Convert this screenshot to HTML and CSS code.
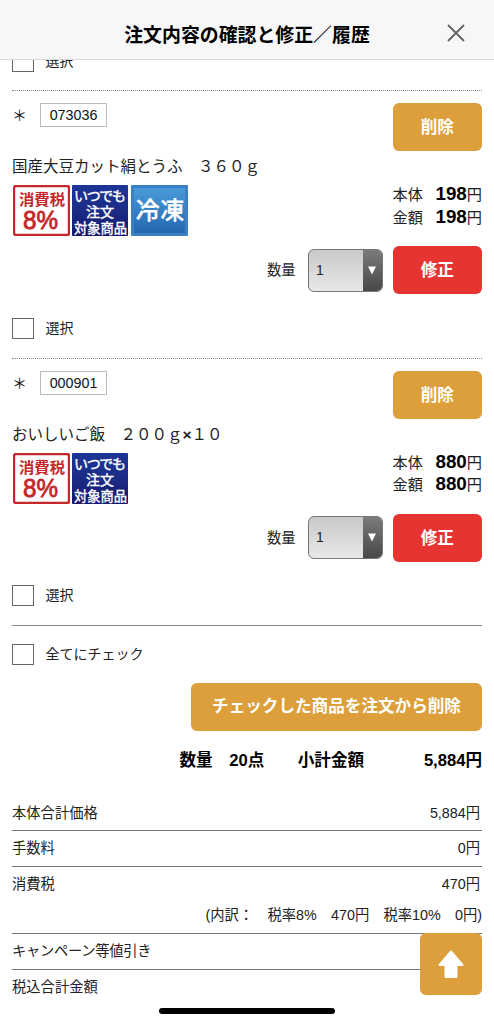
FILE: index.html
```
<!DOCTYPE html>
<html lang="ja">
<head>
<meta charset="utf-8">
<title>注文内容の確認と修正／履歴</title>
<link rel="stylesheet" href="styles.css">
</head>
<body>
<header class="header">
  <h1 class="title">注文内容の確認と修正／履歴</h1>
  <svg class="close" viewBox="0 0 18 18"><path d="M1 1L17 17M17 1L1 17"/></svg>
</header>
<main class="content">
  <label class="check"><span class="box"></span><span>選択</span></label>

  <section class="item">
    <div class="item-head"><span class="star">＊</span><span class="code">073036</span><button class="btn">削除</button></div>
    <div class="name">国産大豆カット絹とうふ　３６０ｇ</div>
    <div class="info">
      <div class="badges">
        <svg class="badge" viewBox="0 0 57 51"><rect class="tax-bg" x="1" y="1" width="55" height="49" rx="2"/><text class="tax-t" x="6" y="20" textLength="46">消費税</text><text class="tax-n" x="10" y="44" textLength="35" lengthAdjust="spacingAndGlyphs">8%</text></svg>
        <svg class="badge" viewBox="0 0 57 51"><defs><linearGradient id="navy" x2="0" y2="1"><stop offset="0" stop-color="#1c3596"/><stop offset=".5" stop-color="#1c2c86"/><stop offset="1" stop-color="#14176c"/></linearGradient></defs><rect width="56" height="51" rx="1" fill="url(#navy)"/><text class="any" x="2" y="16" textLength="52">いつでも</text><text class="any" x="14" y="32" textLength="28">注文</text><text class="any" x="2" y="48" textLength="53" lengthAdjust="spacingAndGlyphs">対象商品</text></svg>
        <svg class="badge" viewBox="0 0 57 51"><defs><linearGradient id="sky" x2="0" y2="1"><stop offset="0" stop-color="#4a9ad9"/><stop offset="1" stop-color="#2467b0"/></linearGradient></defs><rect width="57" height="51" rx="1" fill="#3b7fc4"/><rect x="3" y="3" width="51" height="45" fill="url(#sky)"/><text class="cold" x="5" y="34" textLength="48">冷凍</text></svg>
      </div>
      <div class="prices"><div class="price"><span>本体</span><b>198</b><span>円</span></div><div class="price"><span>金額</span><b>198</b><span>円</span></div></div>
    </div>
    <div class="qty"><span>数量</span><div class="select"><span class="value">1</span><span class="arrow"><svg viewBox="0 0 8 9"><path d="M0 .5H8L4 8.5Z"/></svg></span></div><button class="btn red">修正</button></div>
    <label class="check"><span class="box"></span><span>選択</span></label>
  </section>

  <section class="item">
    <div class="item-head"><span class="star">＊</span><span class="code">000901</span><button class="btn">削除</button></div>
    <div class="name">おいしいご飯　２００ｇ<b>×</b>１０</div>
    <div class="info">
      <div class="badges">
        <svg class="badge" viewBox="0 0 57 51"><rect class="tax-bg" x="1" y="1" width="55" height="49" rx="2"/><text class="tax-t" x="6" y="20" textLength="46">消費税</text><text class="tax-n" x="10" y="44" textLength="35" lengthAdjust="spacingAndGlyphs">8%</text></svg>
        <svg class="badge" viewBox="0 0 57 51"><rect width="56" height="51" rx="1" fill="url(#navy)"/><text class="any" x="2" y="16" textLength="52">いつでも</text><text class="any" x="14" y="32" textLength="28">注文</text><text class="any" x="2" y="48" textLength="53" lengthAdjust="spacingAndGlyphs">対象商品</text></svg>
      </div>
      <div class="prices"><div class="price"><span>本体</span><b>880</b><span>円</span></div><div class="price"><span>金額</span><b>880</b><span>円</span></div></div>
    </div>
    <div class="qty"><span>数量</span><div class="select"><span class="value">1</span><span class="arrow"><svg viewBox="0 0 8 9"><path d="M0 .5H8L4 8.5Z"/></svg></span></div><button class="btn red">修正</button></div>
    <label class="check"><span class="box"></span><span>選択</span></label>
  </section>

  <section class="all">
    <label class="check"><span class="box"></span><span>全てにチェック</span></label>
    <button class="btn wide">チェックした商品を注文から削除</button>
    <div class="subtotal"><span>数量</span><span class="count">20点</span><span class="label">小計金額</span><span class="sum">5,884円</span></div>
  </section>

  <section class="table">
    <div class="row"><span>本体合計価格</span><span>5,884円</span></div>
    <div class="row"><span>手数料</span><span>0円</span></div>
    <div class="row tax"><span>消費税</span><span>470円</span></div>
    <div class="detail">(内訳：　税率8%　470円　税率10%　0円)</div>
    <div class="row"><span class="campaign">キャンペーン等値引き</span></div>
    <div class="row last"><span>税込合計金額</span></div>
  </section>
</main>
<a class="top"><svg viewBox="0 0 26 28"><path d="M13 1.5L24.5 15H18.5V27H7.5V15H1.5Z"/></svg></a>
<div class="home"></div>
</body>
</html>
```
FILE: styles.css
```
* { box-sizing: border-box; }
body {
  margin: 0;
  height: 1024px;
  overflow: hidden;
  position: relative;
  background: #fff;
  color: #222;
  font: 14.3px/22px "Liberation Sans", "Noto Sans CJK JP", sans-serif;
}
.header {
  position: absolute;
  inset: 0 0 auto;
  z-index: 2;
  height: 60px;
  padding-top: 8px;
  display: flex;
  align-items: center;
  justify-content: center;
  background: #f7f7f7;
  border-bottom: 1px solid #d8d8d8;
}
.title { margin: 0; font: 700 18.9px/28px "Noto Sans CJK JP", sans-serif; color: #000; }
.close { position: absolute; left: 447px; top: 24px; width: 18px; height: 18px; fill: none; stroke: #666; stroke-width: 1.9; }
.content { padding: 50.3px 12px 0; }
.check { display: flex; align-items: center; gap: 12px; height: 22px; font-size: 14px; line-height: 21px; }
.box { width: 21.5px; height: 21.5px; border: 1px solid #666; }
.item { height: 267.4px; border-top: 1px dotted #888; padding-top: 12px; }
.content > .check { margin-bottom: 18px; }
.item-head { display: flex; align-items: flex-start; height: 48px; }
.star { width: 28px; line-height: 25px; font-size: 15px; }
.code { width: 67px; height: 24px; border: 1px solid #bbb; text-align: center; line-height: 23px; font-size: 14.3px; color: #111; }
.btn {
  margin: 0 0 0 auto;
  padding: 2px 0 0;
  width: 89.5px;
  height: 48px;
  border: 0;
  border-radius: 6px;
  background: #dc9f3b;
  color: #fff;
  font: 700 16.6px/46px "Liberation Sans", "Noto Sans CJK JP", sans-serif;
}
.red { background: #e63431; margin: 0; }
.name { margin-top: 4px; height: 24px; line-height: 24px; font-size: 15.5px; white-space: nowrap; }
.info { display: flex; justify-content: space-between; margin-top: 6px; height: 51px; }
.badges { display: flex; gap: 2px; padding-left: 1px; }
.badge { width: 57px; height: 51px; }
.tax-bg { fill: #fff; stroke: #c5272b; stroke-width: 2.4; }
.tax-t { fill: #c5272b; font-size: 15.3px; font-weight: 700; }
.tax-n { fill: #c5272b; font-size: 25px; stroke: #c5272b; stroke-width: .8; }
.any { fill: #fff; font-size: 14px; stroke: #fff; stroke-width: .4; }
.cold { fill: #fff; font-size: 23.5px; stroke: #fff; stroke-width: .8; }
.prices { margin-top: -2px; }
.price { display: flex; justify-content: flex-end; align-items: baseline; height: 22.3px; line-height: 22px; font-size: 15.2px; }
.price b { margin-left: 12.5px; font-size: 18.8px; color: #000; }
.qty { display: flex; align-items: center; margin-top: 10px; height: 48px; justify-content: flex-end; }
.select {
  margin: 0 10px 0 12.5px;
  width: 74.5px;
  height: 43px;
  border: 1px solid #777;
  border-radius: 6px;
  background: linear-gradient(#c9c9c9, #e8e8e8);
  display: flex;
  overflow: hidden;
}
.value { flex: 1; padding-left: 7px; line-height: 41px; font-size: 14px; }
.arrow { width: 19px; background: linear-gradient(#7b7b7b, #484848); display: flex; align-items: center; justify-content: center; }
.arrow svg { width: 8px; height: 9px; fill: #fff; }
.item > .check { margin-top: 23px; }
.all { border-top: 1px solid #888; padding-top: 17.5px; height: 167.5px; }
.wide { display: block; width: 291px; margin-top: 17.5px; padding-top: 0; }
.subtotal { display: flex; margin: 17.5px 0 0 167.5px; font-size: 16.6px; line-height: 24px; font-weight: 700; color: #000; }
.count { margin-left: 16.5px; }
.label { margin-left: 33.5px; }
.sum { margin-left: auto; }
.row { display: flex; justify-content: space-between; height: 35.8px; line-height: 35px; border-bottom: 1px solid #777; padding-right: 2px; }
.table { padding-top: 3px; }
.tax { border: 0; height: 31px; }
.detail { height: 36px; border-bottom: 1px solid #777; text-align: right; line-height: 34px; white-space: nowrap; }
.campaign { letter-spacing: -.3px; }
.last { border: 0; }
.top {
  position: absolute;
  left: 420px;
  top: 933px;
  width: 62px;
  height: 62px;
  border-radius: 6px;
  background: #dc9f3b;
  display: flex;
  align-items: center;
  justify-content: center;
}
.top svg { width: 26px; height: 28px; fill: #fff; stroke: #fff; stroke-width: 2; stroke-linejoin: round; }
.home { position: absolute; left: 159px; top: 1008px; width: 176px; height: 6px; border-radius: 3px; background: #000; }
```
